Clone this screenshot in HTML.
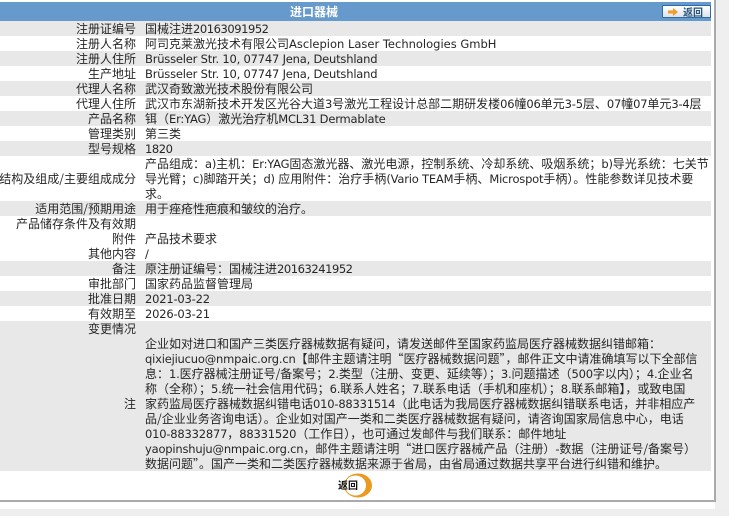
<!DOCTYPE html>
<html><head><meta charset="utf-8">
<style>
html,body{margin:0;padding:0;width:729px;height:516px;overflow:hidden;background:#fff;}
body{position:relative;font-family:"Liberation Sans","Noto Sans CJK SC",sans-serif;font-size:12px;color:#222;}
div{position:absolute;}
.b{left:0;width:711px;height:15px;}
.g{background:#e8e8e8;}
.l{right:593px;white-space:nowrap;line-height:15px;height:15px;font-family:"Noto Sans CJK SC",sans-serif;font-size:12px;}
.v{left:145px;white-space:nowrap;line-height:15px;height:15px;font-size:12px;font-family:"Noto Sans CJK SC",sans-serif;}
.v,.l{color:#262626;}
i{font-style:normal;font-family:"DejaVu Sans",sans-serif;font-size:11.5px;letter-spacing:-.2px;}
i.d{letter-spacing:-.45px;}
i.w{letter-spacing:0;}
</style></head><body>
<div style="left:715px;top:0;width:14px;height:516px;background:#efefef"></div>
<div style="left:0;top:509px;width:729px;height:7px;background:#eee"></div>
<div style="left:714px;top:0;width:2px;height:501px;background:#aaa"></div>
<div style="left:0;top:500px;width:716px;height:2px;background:#aaa"></div>
<div style="left:0;top:2px;width:711px;height:19px;background:#6699cc"></div>
<div style="left:290px;top:4px;line-height:15px;color:#fff;font-weight:bold;font-size:12px;font-family:'Noto Sans CJK SC',sans-serif;">进口器械</div>
<div style="left:662px;top:5px;width:47px;height:11px;border:1px solid #2c6aa8;background:linear-gradient(#fff,#dde2e8);border-radius:1px;">
<svg width="12" height="10" style="position:absolute;left:5px;top:1px"><path d="M0 3.5H5V1L10 5L5 9V6.5H0Z" fill="#ef9d28"/></svg>
<span style="position:absolute;left:20px;top:0;font-size:10px;line-height:12px;font-weight:bold;color:#28557f;font-family:'Noto Sans CJK SC',sans-serif;white-space:nowrap">返回</span>
</div>

<div class="b g" style="top:21px"></div>
<div class="b g" style="top:51px"></div>
<div class="b g" style="top:81px"></div>
<div class="b g" style="top:111px"></div>
<div class="b g" style="top:141px"></div>
<div class="b g" style="top:201px"></div>
<div class="b g" style="top:261px"></div>
<div class="b g" style="top:291px"></div>
<div class="b g" style="top:321px;height:150px"></div>

<div class="l" style="top:21px">注册证编号</div><div class="v" style="top:21px">国械注进<i class="d">20163091952</i></div>
<div class="l" style="top:36px">注册人名称</div><div class="v" style="top:36px">阿司克莱激光技术有限公司<i class="w">Asclepion Laser Technologies GmbH</i></div>
<div class="l" style="top:51px">注册人住所</div><div class="v" style="top:51px"><i>Brüsseler Str. 10, 07747 Jena, Deutshland</i></div>
<div class="l" style="top:66px">生产地址</div><div class="v" style="top:66px"><i>Brüsseler Str. 10, 07747 Jena, Deutshland</i></div>
<div class="l" style="top:81px">代理人名称</div><div class="v" style="top:81px">武汉奇致激光技术股份有限公司</div>
<div class="l" style="top:96px">代理人住所</div><div class="v" style="top:96px">武汉市东湖新技术开发区光谷大道<i>3</i>号激光工程设计总部二期研发楼<i>06</i>幢<i>06</i>单元<i>3-5</i>层、<i>07</i>幢<i>07</i>单元<i>3-4</i>层</div>
<div class="l" style="top:111px">产品名称</div><div class="v" style="top:111px">铒（<i>Er:YAG</i>）激光治疗机<i>MCL31 Dermablate</i></div>
<div class="l" style="top:126px">管理类别</div><div class="v" style="top:126px">第三类</div>
<div class="l" style="top:141px">型号规格</div><div class="v" style="top:141px"><i class="d">1820</i></div>
<div class="l" style="top:171px">结构及组成/主要组成成分</div>
<div class="v" style="top:156px">产品组成：<i>a)</i>主机：<i>Er:YAG</i>固态激光器、激光电源，控制系统、冷却系统、吸烟系统；<i>b)</i>导光系统：七关节</div>
<div class="v" style="top:171px">导光臂；<i>c)</i>脚踏开关；<i>d) </i>应用附件：治疗手柄<i>(Vario TEAM</i>手柄、<i>Microspot</i>手柄）。性能参数详见技术要</div>
<div class="v" style="top:186px">求。</div>
<div class="l" style="top:201px">适用范围/预期用途</div><div class="v" style="top:201px">用于痤疮性疤痕和皱纹的治疗。</div>
<div class="l" style="top:216px">产品储存条件及有效期</div>
<div class="l" style="top:231px">附件</div><div class="v" style="top:231px">产品技术要求</div>
<div class="l" style="top:246px">其他内容</div><div class="v" style="top:246px"><i>/</i></div>
<div class="l" style="top:261px">备注</div><div class="v" style="top:261px">原注册证编号：国械注进<i class="d">20163241952</i></div>
<div class="l" style="top:276px">审批部门</div><div class="v" style="top:276px">国家药品监督管理局</div>
<div class="l" style="top:291px">批准日期</div><div class="v" style="top:291px"><i>2021-03-22</i></div>
<div class="l" style="top:306px">有效期至</div><div class="v" style="top:306px"><i>2026-03-21</i></div>
<div class="l" style="top:321px">变更情况</div>
<div class="l" style="top:396px">注</div>
<div class="v" style="top:336px">企业如对进口和国产三类医疗器械数据有疑问，请发送邮件至国家药监局医疗器械数据纠错邮箱：</div>
<div class="v" style="top:351px"><i>qixiejiucuo@nmpaic.org.cn</i>【邮件主题请注明“医疗器械数据问题”，邮件正文中请准确填写以下全部信</div>
<div class="v" style="top:366px">息：<i>1.</i>医疗器械注册证号/备案号；<i>2.</i>类型（注册、变更、延续等）；<i>3.</i>问题描述（<i>500</i>字以内）；<i>4.</i>企业名</div>
<div class="v" style="top:381px">称（全称）；<i>5.</i>统一社会信用代码；<i>6.</i>联系人姓名；<i>7.</i>联系电话（手机和座机）；<i>8.</i>联系邮箱】，或致电国</div>
<div class="v" style="top:396px">家药监局医疗器械数据纠错电话<i>010-88331514</i>（此电话为我局医疗器械数据纠错联系电话，并非相应产</div>
<div class="v" style="top:411px">品/企业业务咨询电话）。企业如对国产一类和二类医疗器械数据有疑问，请咨询国家局信息中心，电话</div>
<div class="v" style="top:426px"><i>010-88332877</i>，<i>88331520</i>（工作日），也可通过发邮件与我们联系：邮件地址</div>
<div class="v" style="top:441px"><i>yaopinshuju@nmpaic.org.cn</i>，邮件主题请注明“进口医疗器械产品（注册）<i>-</i>数据（注册证号/备案号）</div>
<div class="v" style="top:456px">数据问题”。国产一类和二类医疗器械数据来源于省局，由省局通过数据共享平台进行纠错和维护。</div>

<svg width="29" height="25" style="position:absolute;left:344px;top:473px"><ellipse cx="14" cy="12.5" rx="14" ry="12" fill="#ea9a20"/><ellipse cx="11.5" cy="12.5" rx="10.5" ry="10" fill="#fff"/></svg>
<div style="left:338px;top:478px;font-size:10px;line-height:14px;font-weight:bold;color:#111;font-family:'Noto Sans CJK SC',sans-serif;white-space:nowrap">返回</div>
</body></html>
